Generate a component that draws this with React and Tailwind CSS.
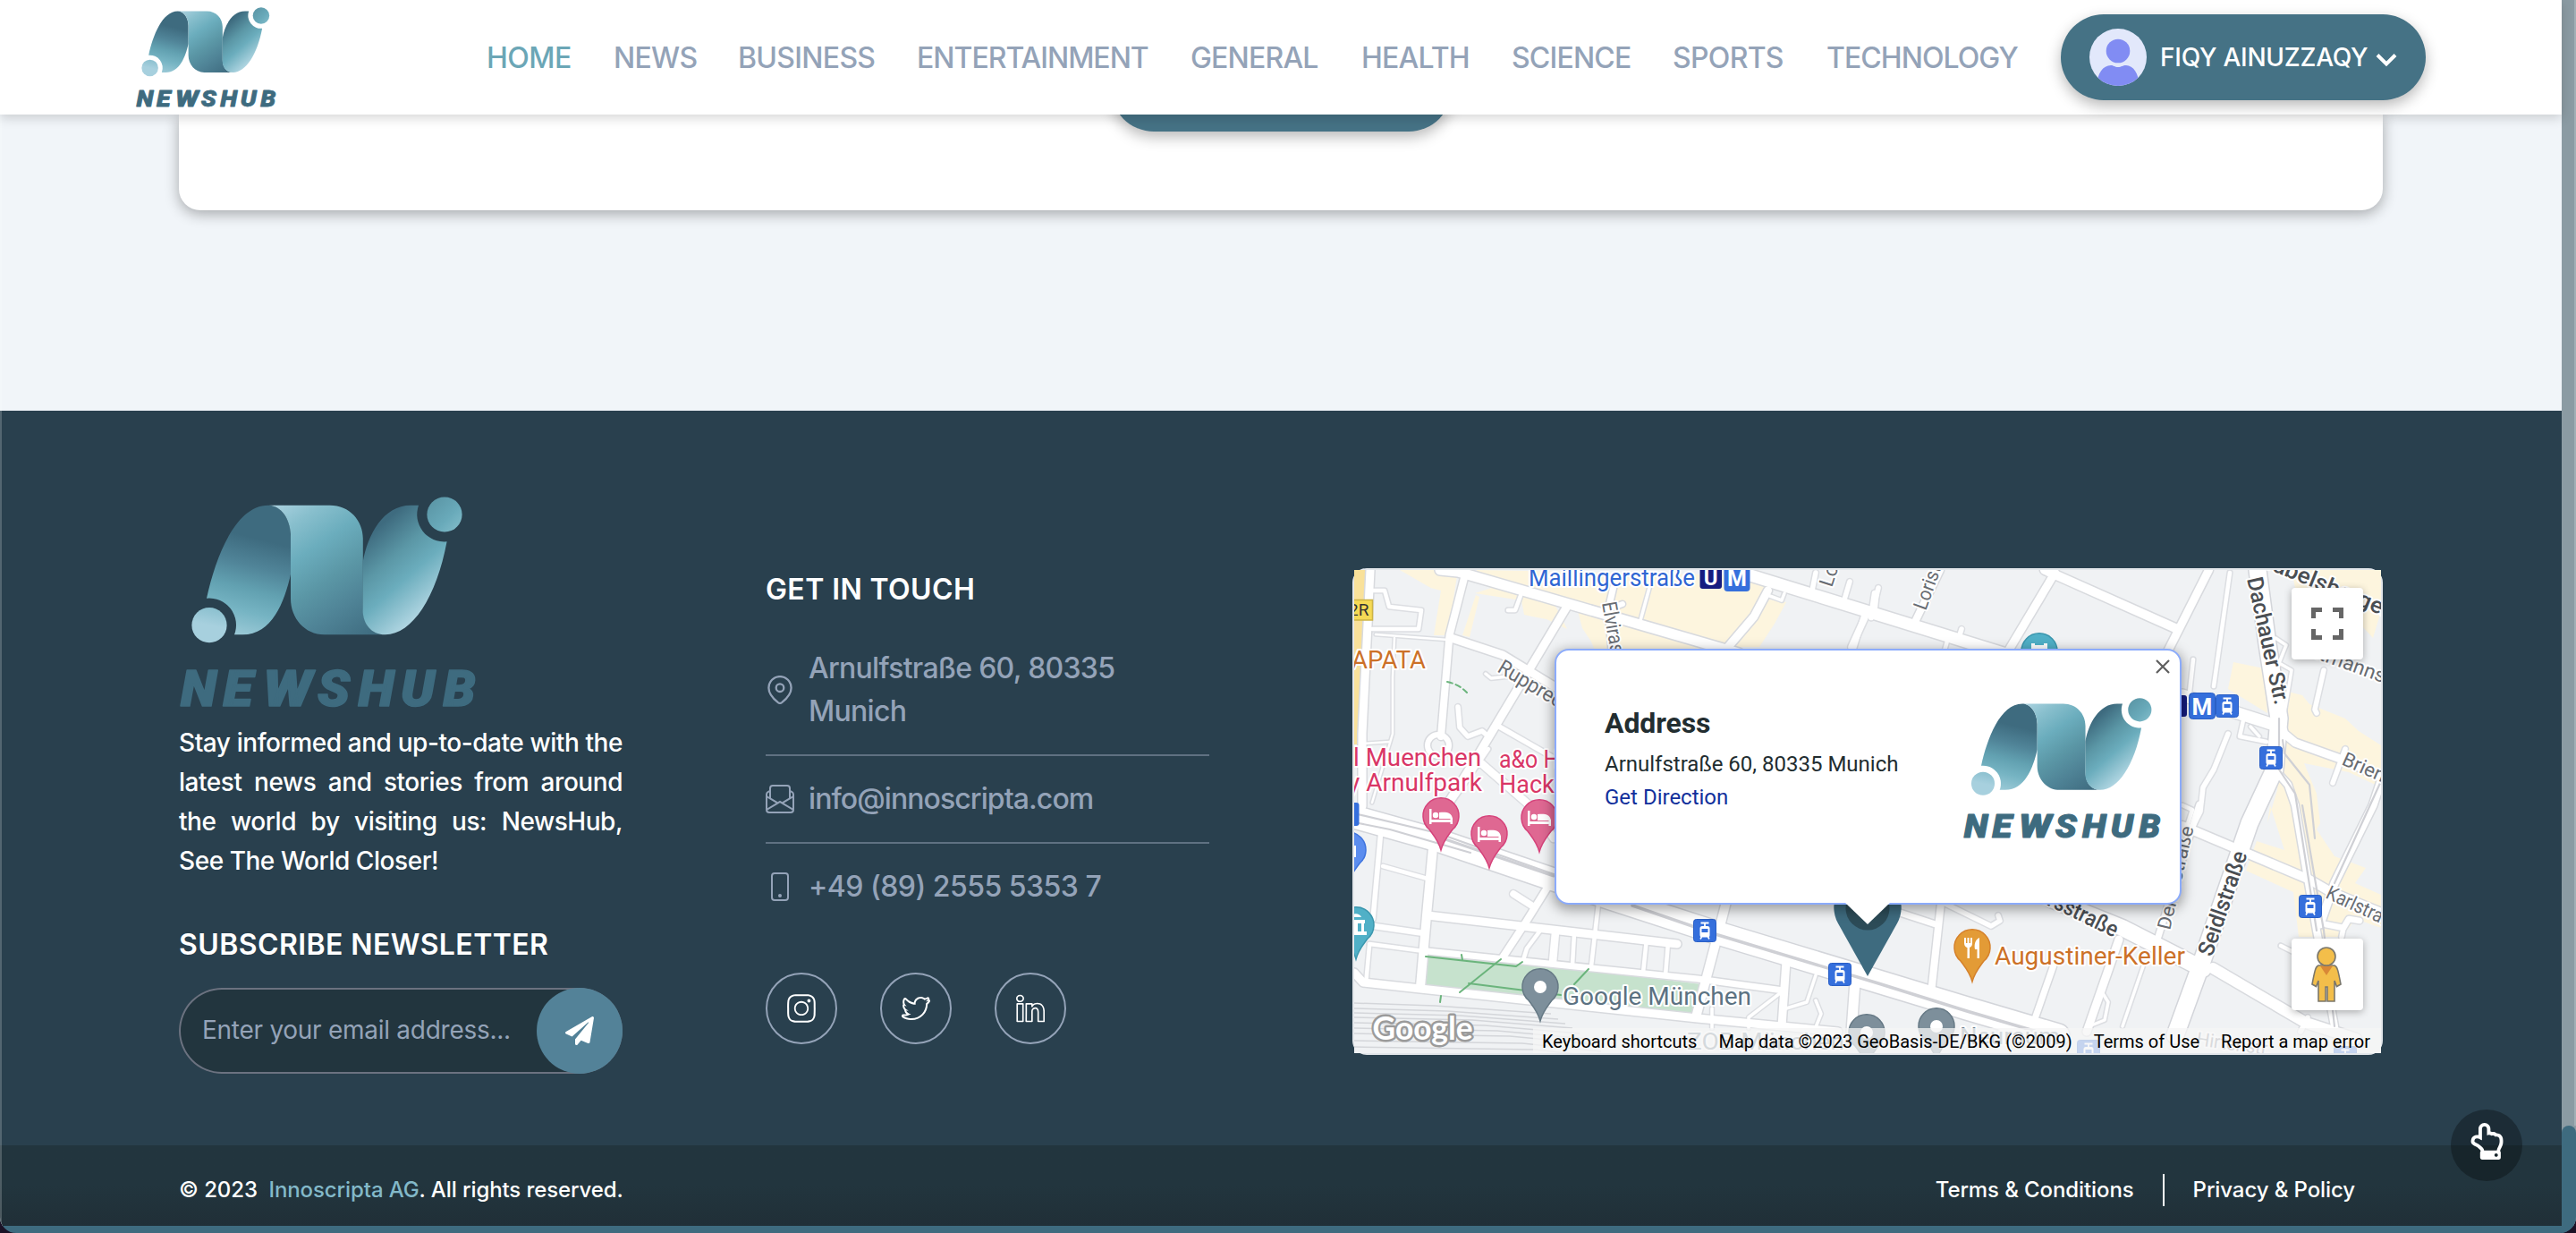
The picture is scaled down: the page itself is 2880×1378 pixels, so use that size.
import React from "react";
import { BsEnvelopePaper, BsPhone } from "react-icons/bs";
import { FaPaperPlane, FaRegHandPointUp } from "react-icons/fa";
import { SlSocialInstagram, SlSocialLinkedin, SlSocialTwitter } from "react-icons/sl";

const wordmark = [
  ["N", 1, 40],
  ["E", 48.5, 33],
  ["W", 93, 55],
  ["S", 154, 36],
  ["H", 199.5, 40],
  ["U", 247, 38],
  ["B", 294.5, 36],
];

function Logo({ id, className }) {
  return (
    <svg viewBox="0 0 330 237" overflow="visible" className={className}>
      <defs>
        <linearGradient id={`${id}-left`} gradientUnits="userSpaceOnUse" x1="98" y1="10" x2="60" y2="160">
          <stop offset="0.25" stopColor="#3e6b7f" />
          <stop offset="0.45" stopColor="#508498" />
          <stop offset="0.62" stopColor="#62a1b1" />
          <stop offset="0.78" stopColor="#76b4c3" />
          <stop offset="1" stopColor="#a3cedb" />
        </linearGradient>
        <linearGradient id={`${id}-mid`} gradientUnits="userSpaceOnUse" x1="112" y1="8" x2="214" y2="158">
          <stop offset="0" stopColor="#a7d0de" />
          <stop offset="0.15" stopColor="#88bfcd" />
          <stop offset="0.34" stopColor="#6badbd" />
          <stop offset="0.55" stopColor="#5b97a6" />
          <stop offset="0.75" stopColor="#4f8396" />
          <stop offset="1" stopColor="#3e6b7f" />
        </linearGradient>
        <linearGradient id={`${id}-right`} gradientUnits="userSpaceOnUse" x1="212" y1="40" x2="284" y2="122">
          <stop offset="0.02" stopColor="#3e6b7f" />
          <stop offset="0.35" stopColor="#5b97a6" />
          <stop offset="0.6" stopColor="#6badbd" />
          <stop offset="0.8" stopColor="#8fc2d0" />
          <stop offset="1" stopColor="#b4d8e4" />
        </linearGradient>
        <linearGradient id={`${id}-top`} x1="0" y1="0" x2="1" y2="1">
          <stop offset="0" stopColor="#5892a2" />
          <stop offset="0.6" stopColor="#69aaba" />
          <stop offset="1" stopColor="#86bfcc" />
        </linearGradient>
        <linearGradient id={`${id}-bottom`} x1="0.6" y1="0" x2="0.4" y2="1">
          <stop offset="0" stopColor="#8bc0cf" />
          <stop offset="0.5" stopColor="#a7d0de" />
        </linearGradient>
      </defs>
      <path d="M30 113.7C40 68 62 9.7 99 9.7C113 9.7 124 25 124 44V86.7C117 118 103 154.3 70.3 154.3H61A30 30 0 0 0 30 113.7Z" fill={`url(#${id}-left)`} />
      <path d="M99.5 9.7H167.7C190 9.7 204.8 27 204.8 46.7V125C205 142 214 154.3 229.7 154.3H161.5C140 154.3 124 136 124 114V42C123 25 114 10.5 99.5 9.7Z" fill={`url(#${id}-mid)`} />
      <path d="M204.6 73.3C210 42 228 9.7 258 9.7H267A30.5 30.5 0 0 0 298.6 50.3C287 112 260 154.3 229.7 154.3C214 154.3 204.6 142 204.6 126.7Z" fill={`url(#${id}-right)`} />
      <circle cx="296" cy="20" r="19.6" fill={`url(#${id}-top)`} />
      <circle cx="33" cy="143.7" r="19.6" fill={`url(#${id}-bottom)`} />
      <g fill="#3e6b7f" stroke="#3e6b7f" strokeWidth="1.6" strokeLinejoin="round" fontFamily="Roboto, sans-serif" fontWeight="900" fontStyle="italic" fontSize="56">
        {wordmark.map(([letter, x, width]) => (
          <text key={letter} x={x} y="234.2" textLength={width} lengthAdjust="spacingAndGlyphs">
            {letter}
          </text>
        ))}
      </g>
    </svg>
  );
}

const navItems = [
  ["HOME", "w-[142px] tracking-[-0.5px] text-[#6ba6b6]"],
  ["NEWS", "w-[139px] tracking-[-0.7px]"],
  ["BUSINESS", "w-[200px] tracking-[-0.7px]"],
  ["ENTERTAINMENT", "w-[306px] tracking-[-1px]"],
  ["GENERAL", "w-[191px] tracking-[-0.8px]"],
  ["HEALTH", "w-[168px] tracking-[-0.8px]"],
  ["SCIENCE", "w-[180px] tracking-[-0.8px]"],
  ["SPORTS", "w-[172px] tracking-[-0.7px]"],
  ["TECHNOLOGY", "w-[263px] tracking-[-0.95px]"],
];

function Header() {
  return (
    <header className="relative z-10 flex h-32 items-center bg-white pl-[152px] shadow-[0_4px_12px_rgba(0,0,0,0.16)]">
      <Logo id="nav" className="h-28 w-[156px] shrink-0" />
      <nav className="ml-[236px] flex pt-0.5 text-[32px] leading-[48px] font-[450] whitespace-nowrap text-[#94a3b8]">
        {navItems.map(([label, cls]) => (
          <a key={label} className={cls}>
            {label}
          </a>
        ))}
      </nav>
      <button className="-ml-px flex h-24 w-[408px] shrink-0 items-center rounded-full bg-[#457285] pl-8 text-white shadow-[0_6px_16px_rgba(0,0,0,0.28)]">
        <svg viewBox="0 0 64 64" className="size-16 shrink-0">
          <clipPath id="avatar-clip">
            <circle cx="32" cy="32" r="32" />
          </clipPath>
          <g clipPath="url(#avatar-clip)">
            <rect width="64" height="64" fill="#e2e8fb" />
            <circle cx="32" cy="25" r="13.3" fill="#818cf3" />
            <path d="M8 64C9 50 15 41 24 41C27 41 28 43 32 43C36 43 37 41 41 41C49 41 55 50 56 64Z" fill="#818cf3" />
          </g>
        </svg>
        <span className="ml-[15px] text-[28px] font-medium tracking-[-0.24px] whitespace-nowrap">FIQY AINUZZAQY</span>
        <svg viewBox="0 0 24 16" className="mt-1.5 ml-[9px] h-4 w-6" fill="none" stroke="currentColor" strokeWidth="4">
          <path d="M2 2.5L12 12.5L22 2.5" />
        </svg>
      </button>
    </header>
  );
}

const zones = [
  "51,0 116,0 104.6,73 89,73 97,23 85.5,20",
  "137,0 437,6 462,20 418,86 300,50 137,3",
  "135,26 187,34 190,50 199,52 215,55 238,66 225,40 160,18",
  "136,28 121,73 129,75 140,30",
  "250,46 300,58 420,90 290,88 275,104 265,80 255,65",
  "464,33 483,36 470,60 453,86 424,86",
  "983,103 1017,110 1021,160 977,133",
  "1044,136 1060,140 1068,150 1108,166 1123,180 1148,196 1148,243 1112,226 1062,216 1076,250 1080,283 1076,290 1096,320 1131,333 1119,350 1148,363 1148,400 1120,390 1104,410 1056,410 1050,360 997,336 1009,303 1040,313 1024,263 1021,283 1032,246",
  "1048,0 1148,0 1148,46 1139,76 1127,63 1052,20",
];

const minorRoads = [
  ["20,66 72,66 75,45 39,41 34,23 20,23", 5],
  ["24,72 104.6,78", 3],
  ["45,76 43,120 43,183 20,260", 3],
  ["10,194 40,192", 3],
  ["162,175 223,210", 6],
  ["187,26 180,45 172,45", 5],
  ["330,20 319,60", 4],
  ["147,116 153,121 172,119 189,126", 4],
  ["116,153 118,176 127,186 143,180 150,186", 6],
  ["462,28 478,34 481,26", 4],
  ["516,3 512,23", 6],
  ["554,13 548,33", 6],
  ["584,26 582,46", 6],
  ["571,53 556,86", 8],
  ["586,20 578,53", 6],
  ["582,26 578,53", 7],
  ["570,50 556,96", 6],
  ["679,66 676,76", 6],
  ["664,76 660,90", 5],
  ["104.6,266 150,200", 5],
  ["142,216 204,270 223,300", 9],
  ["30,290 21,390", 6],
  ["32,331 82,345", 5],
  ["22,398 78,406", 7],
  ["17,418 78,426", 5],
  ["17,420 13,463", 5],
  ["178,362 200,376", 8],
  ["273,373 265,443", 5],
  ["223,405 220,438", 5],
  ["227,405 224,438", 5],
  ["246,406 244,441", 5],
  ["326.6,416 323,450", 5],
  ["351,416 348,453", 5],
  ["208,403 193,423 189,436", 5],
  ["516,453 506,483 483,490", 4],
  ["516,481 522,496 516,511", 4],
  ["480,470 441,500 441,512", 4],
  ["400,490 400,512", 4],
  ["661,373 712,398 722,392 720,386", 6],
  ["882,443 859,510", 4],
  ["835,470 843,483 839,503 819,511", 4],
  ["938,100 934,136", 5],
  ["979,3 961,130", 5],
  ["977,183 961,223 949,243 946,270 936,290", 6],
  ["926,263 937,268 930,290", 5],
  ["994,168 990,186 1020,192", 5],
  ["1002,175 1012,186", 4],
  ["1030,76 1042,84 1034,104 1048,112 1040,160", 4],
  ["1084,112 1074,156 1076,160", 6],
  ["1108,200 1094,238", 6],
  ["1124,392 1112,390 1106,400 1086,396", 7],
  ["1106,400 1104,410", 6],
  ["1036,420 1060,432", 5],
  ["1066,500 1058,516", 6],
];

const roads = [
  ["18,0 9,183 9,264", 9],
  ["124.5,3 106.5,73 97,186", 8],
  ["238.6,39.7 139,206 104,262", 9],
  ["108.5,76 166,95 240,140", 9],
  ["292,10 284,44 288,90", 7],
  ["284,44 300,38", 6],
  ["462.5,23 447,52 418,86", 9],
  ["96,0 116,2 430,93", 11],
  ["430,2 586,50 732,95", 13],
  ["783.5,3 728,96", 9],
  ["772,0 918,65", 10],
  ["955.5,0 910,90", 9],
  ["627,58 655,0", 8],
  ["89,300 81,386 74,466", 10],
  ["81.7,386 361,418", 9],
  ["81.7,426 384,457 480,470", 7],
  ["219,350 191,395 166,433", 8],
  ["0,450 10,461 74,468 384,501 541,516", 9],
  ["418,363 407,406 382,500", 10],
  ["483.5,430 478,510", 9],
  ["560,460 556,516", 11],
  ["657,363 645,473", 8],
  ["607,382 653,397", 7],
  ["855,413 819,516", 9],
  ["781.5,443 756,516", 7],
  ["945,262 898,413", 7],
  ["926,286 997,316 1068,346 1092,360 1148,383", 10],
  ["1148,236 1139,263 1096,350 1080,396", 9],
  ["1029,223 1044,240 1052,263 1076,403 1096,510", 8],
  ["926,140 1025,172", 13],
  ["1034,166 1040,183 1052,193 1108,213 1148,232", 9],
  ["960,445 1064,506 1120,524", 12],
];

const avenues = [
  ["0,276 93,302 223,346 311,375 407,406 586,460 685,490 787,520", 25],
  ["779,368 859,400 949,446", 18],
  ["1010,0 1021,83 1034,166 1029,223 1001,283 946,443 918,520", 19],
];

const railLines = [
  "0,272 93,294 223,340",
  "0,282 40,290 130,316",
  "1034,166 1034,223 1052,250 1076,403",
  "1060,263 1084,403 1096,510",
  "1148,236 1096,350",
  "1038,190 1040,205 1068,240 1074,300",
];

const pins = {
  hotel: { fill: "#df6892", stroke: "#d6427a" },
  teal: { fill: "#50b0c7", stroke: "#3b97ae" },
  blue: { fill: "#5b8def", stroke: "#3f74de" },
  food: { fill: "#e39b36", stroke: "#d5812b" },
  grey: { fill: "#7d8f9b", stroke: "#667985" },
};

function Pin({ x, y, kind, children }) {
  return (
    <g transform={`translate(${x} ${y})`}>
      <path d="M0 38C-3 27 -8 22 -13 15A20 20 0 1 1 13 15C8 22 3 27 0 38Z" fill={pins[kind].fill} stroke={pins[kind].stroke} strokeWidth="1.5" />
      {children}
    </g>
  );
}

function Bed() {
  return (
    <g fill="#fff">
      <rect x="-13" y="-8" width="2.5" height="17" />
      <rect x="-13" y="4" width="26" height="3" />
      <rect x="10.5" y="2" width="2.5" height="7" />
      <circle cx="-6" cy="-1" r="3.2" />
      <path d="M-2 3V-4C6 -5 12 -4 13 3Z" />
    </g>
  );
}

function Tram({ x, y }) {
  return (
    <g transform={`translate(${x} ${y})`}>
      <rect x="0.5" y="0.5" width="25" height="25" rx="3" fill="#356fdc" stroke="#2a5fc6" />
      <path d="M8.5 4.5H17.5M13 4.5V8" stroke="#fff" strokeWidth="1.8" fill="none" />
      <rect x="7.5" y="8" width="11" height="12.5" rx="2.5" fill="#fff" />
      <rect x="9.5" y="11" width="7" height="4" fill="#356fdc" />
      <path d="M9.5 20L8 22.5M16.5 20L18 22.5" stroke="#fff" strokeWidth="1.6" />
    </g>
  );
}

function MapLabel({ x, y, width, size = 27, fill = "#4a4e53", weight = 400, angle = 0, children }) {
  return (
    <text
      transform={`translate(${x} ${y}) rotate(${angle})`}
      textLength={width}
      lengthAdjust="spacingAndGlyphs"
      fontSize={size}
      fontWeight={weight}
      fill={fill}
      stroke="#fff"
      strokeWidth="4"
      strokeLinejoin="round"
      paintOrder="stroke"
    >
      {children}
    </text>
  );
}

function CityMap() {
  return (
    <svg viewBox="0 0 1148 540" className="h-[540px] w-[1148px]" fontFamily="Roboto, sans-serif">
      <rect width="1148" height="540" fill="#f0f2f4" />
      <path d="M0 0H14L3 195H0Z" fill="#f9e19a" />
      {zones.map((p) => (
        <polygon key={p} points={p} fill="#fdf5de" />
      ))}
      <polygon points="80,426 388,463 376,500 77,465" fill="#c6e2cd" />
      <g fill="none" stroke="#d4d6da" strokeWidth="1.5">
        {[484, 490, 495, 500, 506, 512, 518, 526, 533].map((y, i) => (
          <path key={y} d={`M0 ${y}L${90 + i * 14} ${y + 3}L${220 + i * 8} ${y + 12}`} />
        ))}
      </g>
      <g fill="none" strokeLinejoin="round" strokeLinecap="round">
        {minorRoads.map(([p, w]) => (
          <polyline key={`c${p}`} points={p} stroke="#dcdee2" strokeWidth={w + 2.5} />
        ))}
        {roads.map(([p, w]) => (
          <polyline key={`c${p}`} points={p} stroke="#d8dade" strokeWidth={w + 3} />
        ))}
        {avenues.map(([p, w]) => (
          <polyline key={`c${p}`} points={p} stroke="#d3d5da" strokeWidth={w + 3} />
        ))}
        <circle cx="94" cy="196" r="12" stroke="#d8dade" strokeWidth="9" />
        {minorRoads.map(([p, w]) => (
          <polyline key={p} points={p} stroke="#fff" strokeWidth={w - 0.5} />
        ))}
        {roads.map(([p, w]) => (
          <polyline key={p} points={p} stroke="#fff" strokeWidth={w} />
        ))}
        {avenues.map(([p, w]) => (
          <polyline key={p} points={p} stroke="#fff" strokeWidth={w} />
        ))}
        <circle cx="94" cy="196" r="12" stroke="#fff" strokeWidth="6" />
        {railLines.map((p) => (
          <polyline key={p} points={p} stroke="#cfd0d5" strokeWidth="2.2" />
        ))}
        <polyline points="93,298 223,342" stroke="#cfd0d5" strokeWidth="3" />
        <polyline points="311,375 407,408 586,462 685,493 787,523" stroke="#cfd0d5" strokeWidth="3.5" />
        <g stroke="#6bb47c" strokeWidth="2">
          <polyline points="80,432 181,443 188,438" />
          <polyline points="164,435 118,472" />
          <polyline points="128,462 231,475" />
          <polyline points="262,446 246,463" />
          <polyline points="120,430 121,436" />
          <polyline points="97,476 96,483" />
          <path d="M104 125C113 127 119 130 126 137" strokeDasharray="6 4" />
        </g>
      </g>

      <rect x="-12" y="33.5" width="32.5" height="22.5" fill="#f6da55" stroke="#cdb446" strokeWidth="1.5" />
      <text x="-6" y="51" fontSize="19" fill="#333">2R</text>

      <MapLabel x={195} y={18} width={186} fill="#2f66d3">Maillingerstraße</MapLabel>
      <rect x="386.5" y="-5" width="24.5" height="26" rx="3" fill="#151c7f" />
      <text x="398.7" y="17" fontSize="24" fontWeight="700" textAnchor="middle" fill="#fff">U</text>
      <rect x="413.5" y="-5" width="29" height="29" rx="4" fill="#356fdc" />
      <text x="428" y="18" fontSize="25" fontWeight="700" textAnchor="middle" fill="#fff">M</text>

      <MapLabel x={277} y={37} width={104} size={23} angle={80} fill="#686c72">Elvirastraße</MapLabel>
      <MapLabel x={159} y={113} width={162} size={23} angle={31} fill="#686c72">Rupprechtstraße</MapLabel>
      <MapLabel x={-3} y={109.7} width={83} fill="#cc7128">APATA</MapLabel>
      <MapLabel x={-1} y={218.5} width={143} fill="#d93666">l Muenchen</MapLabel>
      <MapLabel x={-7} y={246.5} width={150} fill="#d93666">y Arnulfpark</MapLabel>
      <MapLabel x={162} y={220.7} width={122} fill="#d93666">a&amp;o Hostel</MapLabel>
      <MapLabel x={162} y={248.5} width={166} fill="#d93666">Hackerbrücke</MapLabel>
      <MapLabel x={534} y={20} width={44} size={22} angle={-72} fill="#686c72">Loth</MapLabel>
      <MapLabel x={639} y={46} width={92} size={22} angle={-70} fill="#686c72">Loristraße</MapLabel>
      <MapLabel x={998} y={10} width={145} size={25} weight={500} angle={77.5}>Dachauer Str.</MapLabel>
      <MapLabel x={1009} y={-6} width={158} size={25} weight={500} angle={22}>Gabelsberger</MapLabel>
      <MapLabel x={1056} y={92} width={120} size={22} angle={20} fill="#686c72">Ottmannstr.</MapLabel>
      <MapLabel x={1103} y={217} width={82} size={22} angle={24} fill="#686c72">Brienner</MapLabel>
      <MapLabel x={1085} y={366} width={90} size={22} angle={25} fill="#686c72">Karlstraße</MapLabel>
      <MapLabel x={959} y={433} width={122} size={25} weight={500} angle={-71}>Seidlstraße</MapLabel>
      <MapLabel x={912} y={403} width={118} size={21} angle={-77} fill="#686c72">Denisstraße</MapLabel>
      <MapLabel x={745} y={360} width={116} size={25} weight={500} angle={26}>Marsstraße</MapLabel>

      <rect x="-10" y="260" width="15.5" height="26" rx="3" fill="#356fdc" />
      <Pin x={-7} y={313} kind="blue">
        <rect x="-6" y="-5" width="15" height="13" fill="#fff" />
      </Pin>
      <Pin x={2} y={397} kind="teal">
        <path d="M-6 -9C-4 -14 4 -14 6 -9ZM-4 -6H10V-2H-4ZM-2 -2H2V7H-2ZM6 -2H9V7H6ZM-5 7H12V11H-5Z" fill="#fff" />
      </Pin>
      <Pin x={97} y={275} kind="hotel"><Bed /></Pin>
      <Pin x={151} y={295} kind="hotel"><Bed /></Pin>
      <Pin x={207} y={277} kind="hotel"><Bed /></Pin>
      <Pin x={766} y={91} kind="teal">
        <path d="M-9 -9H-5V-7H5V-9H9V3H-9Z" fill="#fff" />
      </Pin>

      <Tram x={379} y={390} />
      <Tram x={530} y={439} />
      <rect x="905" y="140" width="26" height="24" rx="3" fill="#151c7f" />
      <text x="918" y="161" fontSize="24" fontWeight="700" textAnchor="middle" fill="#fff">U</text>
      <rect x="933.5" y="137.5" width="29" height="29" rx="4" fill="#356fdc" stroke="#2a5fc6" />
      <text x="948" y="161.5" fontSize="26" fontWeight="700" textAnchor="middle" fill="#fff">M</text>
      <Tram x={963} y={139} />
      <Tram x={1012} y={197} />
      <Tram x={1056} y={363} />

      <Pin x={208} y={466} kind="grey"><circle r="7" fill="#fff" /></Pin>
      <MapLabel x={233} y={485.7} width={211} fill="#5c7282">Google München</MapLabel>
      <Pin x={691} y={422} kind="food">
        <path d="M-9 -11V-5C-9 -1 -6 0 -5.5 0V12H-3V0C-1 -1 0 -2 0 -5V-11H-2V-5H-3.5V-11H-5.5V-5H-7V-11ZM8 -11C3 -9 2 -3 3 2H5.5V12H8Z" fill="#fff" />
      </Pin>
      <MapLabel x={716} y={441} width={213} fill="#cc7128">Augustiner-Keller</MapLabel>
      <Pin x={573} y={517} kind="grey"><circle r="7" fill="#fff" /></Pin>
      <Pin x={651} y={510} kind="grey"><circle r="7" fill="#fff" /></Pin>
      <MapLabel x={372} y={536} width={176} size={26} fill="#6f8290">ZOB München</MapLabel>
      <MapLabel x={677} y={530} width={112} size={26} fill="#6f8290">Neuraum</MapLabel>
      <MapLabel x={941} y={531} width={84} size={21} angle={8} fill="#85898f">Hirtenstr.</MapLabel>
      <Tram x={808} y={525} />
      <Tram x={1095} y={532} />

      <text
        x="20.5"
        y="524.5"
        fontSize="37"
        fontFamily="Lato, sans-serif"
        fontWeight="700"
        textLength="112"
        lengthAdjust="spacingAndGlyphs"
        fill="#fff"
        stroke="#9b9b9b"
        strokeWidth="5"
        strokeLinejoin="round"
        paintOrder="stroke"
      >
        Google
      </text>

      <path d="M574 454L541 395A37.700 37.700 0 1 1 607 395Z" fill="#3e6b7f" />
      <circle cx="574" cy="378" r="24.5" fill="#2c4b57" />
    </svg>
  );
}

function InfoWindow() {
  return (
    <div className="absolute top-[88px] left-[224px] h-[286px] w-[701px]">
      <div className="flex h-full justify-between rounded-2xl border-2 border-[#8babfb] bg-white pr-[22px] pl-[54px] font-[Roboto,sans-serif] shadow-[0_4px_14px_2px_rgba(0,0,0,0.35)]">
        <div className="pt-[61px] whitespace-nowrap text-[#222d30]">
          <h3 className="text-[32px] leading-10 font-bold tracking-[-0.1px]">Address</h3>
          <p className="mt-2 text-2xl leading-[37px]">Arnulfstraße 60, 80335 Munich</p>
          <a className="block text-2xl leading-[37px] text-[#12309c]">Get Direction</a>
        </div>
        <Logo id="info" className="mt-[53px] h-[158px] w-[220px]" />
      </div>
      <div className="absolute top-[283px] left-[324px] h-[25px] w-[52px] bg-white [clip-path:polygon(0_0,100%_0,50%_100%)]" />
      <svg viewBox="0 0 16 16" className="absolute top-3 right-[13px] size-4" stroke="#5f5f5f" strokeWidth="2.2">
        <path d="M1 1L15 15M15 1L1 15" />
      </svg>
    </div>
  );
}

function MapPanel() {
  return (
    <div className="relative mt-20 h-[544px] w-[1152px] rounded-2xl border-2 border-[#e2e6ea] bg-[#f0f2f4]">
      <CityMap />
      <InfoWindow />
      <div className="absolute top-5 right-5 flex size-20 items-center justify-center rounded bg-white shadow-[0_2px_8px_rgba(0,0,0,0.3)]">
        <svg viewBox="0 0 36 36" className="size-9" fill="none" stroke="#666" strokeWidth="5">
          <path d="M2.5 12V2.5H12M24 2.5H33.5V12M33.5 24V33.5H24M12 33.5H2.5V24" />
        </svg>
      </div>
      <div className="absolute right-5 bottom-12 flex size-20 items-center justify-center rounded bg-white pr-0.5 shadow-[0_2px_8px_rgba(0,0,0,0.3)]">
        <svg viewBox="0 0 34 62" className="h-[62px] w-[34px]" fill="#f3be4a" stroke="#7b776b" strokeWidth="1.6">
          <path d="M8 21H26C29 22 30 26 33 42L28.500 44.500L26 38V61H18V45H16V61H8V38L5.500 44.500L1 42C4 26 5 22 8 21Z" />
          <path d="M10 21.500H24L17 32Z" fill="#d98836" stroke="none" />
          <circle cx="17" cy="11" r="10" />
        </svg>
      </div>
      <div className="absolute right-0 bottom-0 left-[200px] flex h-7 items-center justify-end gap-6 bg-[#f5f5f5]/75 pt-0.5 pr-3 font-[Roboto,sans-serif] text-xl leading-6 whitespace-nowrap text-black">
        <span>Keyboard shortcuts</span>
        <span>Map data ©2023 GeoBasis-DE/BKG (©2009)</span>
        <span>Terms of Use</span>
        <span>Report a map error</span>
      </div>
    </div>
  );
}

function LocationPin({ className }) {
  return (
    <svg viewBox="0 0 32 32" className={className} fill="none" stroke="currentColor" strokeWidth="2.3">
      <path d="M13.900 30.100C8 25.500 3.400 20 3.400 13.700A12.600 12.600 0 0 1 28.600 13.700C28.600 20 24 25.500 18.100 30.100Q16 31.600 13.900 30.100Z" />
      <circle cx="16" cy="13.700" r="4.300" />
    </svg>
  );
}

function ContactRow({ icon: Icon, children, last }) {
  return (
    <li className={last ? "flex items-center gap-4 py-6" : "flex items-center gap-4 border-b-2 border-[#5f7182] py-6"}>
      <Icon className="size-8 shrink-0" />
      {children}
    </li>
  );
}

function Social({ icon: Icon }) {
  return (
    <a className="flex size-20 items-center justify-center rounded-full border-2 border-[#94a3b8] text-white">
      <Icon className="size-8" />
    </a>
  );
}

function Footer() {
  return (
    <footer>
      <div className="grid h-[821px] grid-cols-[496px_496px_1152px] items-start gap-x-40 bg-[#29404e] px-[200px] pt-24">
        <div className="text-white">
          <Logo id="footer" className="ml-px h-[237px] w-[330px]" />
          <p className="mt-4 text-justify text-[28px] leading-[44px] font-[450] tracking-[-0.45px]">
            Stay informed and up-to-date with the latest news and stories from around the world by visiting us: NewsHub, See The World Closer!
          </p>
          <h4 className="mt-12 text-[32px] leading-[48px] font-semibold tracking-[0.41px]">SUBSCRIBE NEWSLETTER</h4>
          <div className="mt-6 flex h-24 justify-between rounded-full bg-[#22353e] shadow-[inset_0_0_0_2px_#6b7280]">
            <span className="pl-[26px] text-[28px] leading-[95px] tracking-[-0.27px] text-[#94a3b8]">Enter your email address...</span>
            <button className="flex size-24 items-center justify-center rounded-full bg-[#538298]">
              <FaPaperPlane className="size-8" />
            </button>
          </div>
        </div>

        <div className="mt-20">
          <h4 className="text-[32px] leading-[48px] font-semibold tracking-[0.4px] text-white">GET IN TOUCH</h4>
          <ul className="mt-4 text-[32px] leading-[48px] font-[450] text-[#94a3b8]">
            <ContactRow icon={LocationPin}>
              <span className="w-[380px] tracking-[-0.72px]">Arnulfstraße 60, 80335 Munich</span>
            </ContactRow>
            <ContactRow icon={BsEnvelopePaper}>
              <span className="tracking-[-0.92px]">info@innoscripta.com</span>
            </ContactRow>
            <ContactRow icon={BsPhone} last>
              <span className="tracking-[-0.52px]">+49 (89) 2555 5353 7</span>
            </ContactRow>
          </ul>
          <div className="mt-12 flex gap-12">
            <Social icon={SlSocialInstagram} />
            <Social icon={SlSocialTwitter} />
            <Social icon={SlSocialLinkedin} />
          </div>
        </div>

        <MapPanel />
      </div>

      <div className="flex h-[90px] items-center justify-between bg-gradient-to-b from-[#22353e] via-[#22353e] to-[#202f37] pt-2.5 pr-[231px] pl-[200px] text-2xl font-[450] tracking-[-0.1px] text-white">
        <p>
          © 2023&nbsp; <a className="text-[#83b9c9]">Innoscripta AG</a>. All rights reserved.
        </p>
        <div className="flex items-center gap-8">
          <a>Terms &amp; Conditions</a>
          <span className="h-9 w-0.5 bg-white" />
          <a>Privacy &amp; Policy</a>
        </div>
      </div>
    </footer>
  );
}

export default function App() {
  return (
    <div className="h-[1378px] w-[2880px] overflow-hidden bg-[#1b1226]">
      <div className="relative grid h-[1378px] grid-cols-[2864px_16px] grid-rows-[1370px_8px] overflow-hidden rounded-b-[18px] bg-[#3e6b7f] font-[Inter,sans-serif]">
        <main className="bg-[#f1f5f9]">
          <Header />
          <section className="h-[331px] px-[200px]">
            <div className="flex h-[107px] justify-center rounded-b-3xl bg-white shadow-[0_4px_16px_rgba(0,0,0,0.32)]">
              <div className="-mt-[77px] h-24 w-[381px] rounded-full bg-[#457285] shadow-[0_6px_16px_rgba(0,0,0,0.28)]" />
            </div>
          </section>
          <Footer />
        </main>
        <aside className="flex flex-col bg-[#8b9ba3]">
          <div className="flex-1 border-r-2 border-[#a2afb5]" />
          <div className="-mb-2 h-[120px] rounded-t-full bg-[#3e6b7f]" />
        </aside>
        <div className="absolute inset-y-0 left-0 w-0.5 bg-white/20" />
        <button className="absolute right-[60px] bottom-[58px] flex size-20 items-center justify-center rounded-full bg-black/30 pb-2.5 text-white">
          <FaRegHandPointUp className="size-[41px]" />
        </button>
      </div>
    </div>
  );
}
